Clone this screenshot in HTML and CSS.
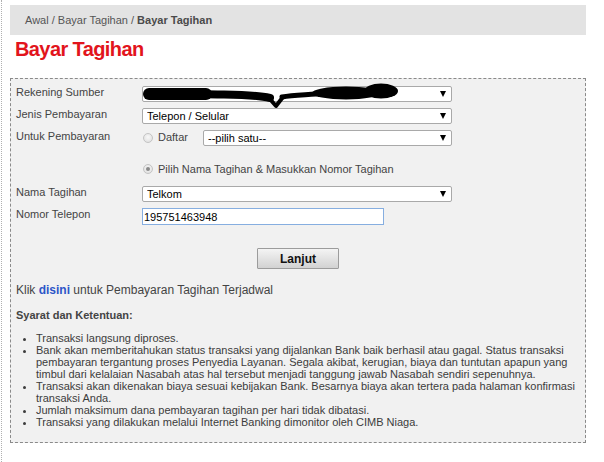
FILE: index.html
```html
<!DOCTYPE html>
<html lang="id">
<head>
<meta charset="utf-8">
<title>Bayar Tagihan</title>
<link rel="stylesheet" href="styles.css">
</head>
<body>
<div class="page">
  <div class="crumb">Awal / Bayar Tagihan / <b>Bayar Tagihan</b></div>
  <h1 class="title">Bayar Tagihan</h1>
  <div class="box">
    <div class="row">
      <div class="label">Rekening Sumber</div>
      <div class="field">
        <span class="sel full">
          <select><option></option></select>
          <svg class="redact" width="262" height="24" viewBox="0 0 262 24">
            <path d="M7 8 L64 8" stroke="#000" stroke-width="12" stroke-linecap="round" fill="none"/>
            <path d="M60 8 C90 9 110 8 128 12" stroke="#000" stroke-width="8" stroke-linecap="round" fill="none"/>
            <path d="M127 12 L134 20 L141 11" stroke="#000" stroke-width="4" stroke-linecap="round" stroke-linejoin="round" fill="none"/>
            <path d="M140 11 C150 9 160 9 174 8" stroke="#000" stroke-width="5" stroke-linecap="round" fill="none"/>
            <ellipse cx="204" cy="7" rx="34" ry="6.5" fill="#000"/>
            <ellipse cx="239" cy="5" rx="17" ry="7.5" fill="#000"/>
          </svg>
        </span>
      </div>
    </div>
    <div class="row">
      <div class="label">Jenis Pembayaran</div>
      <div class="field">
        <span class="sel full"><select><option>Telepon / Selular</option></select></span>
      </div>
    </div>
    <div class="row">
      <div class="label">Untuk Pembayaran</div>
      <div class="field opt">
        <input type="radio" name="mode" class="radio">
        <span class="opt-text narrow">Daftar</span>
        <span class="sel short"><select><option>--pilih satu--</option></select></span>
      </div>
    </div>
    <div class="row row-radio">
      <div class="label"></div>
      <div class="field opt">
        <input type="radio" name="mode" class="radio" checked>
        <span class="opt-text">Pilih Nama Tagihan &amp; Masukkan Nomor Tagihan</span>
      </div>
    </div>
    <div class="row row-after">
      <div class="label">Nama Tagihan</div>
      <div class="field">
        <span class="sel full"><select><option>Telkom</option></select></span>
      </div>
    </div>
    <div class="row">
      <div class="label">Nomor Telepon</div>
      <div class="field">
        <input class="phone" type="text" value="195751463948">
      </div>
    </div>
    <div class="actions">
      <button class="btn" type="button">Lanjut</button>
    </div>
    <p class="klik">Klik <a class="link" href="#">disini</a> untuk Pembayaran Tagihan Terjadwal</p>
    <p class="terms-title">Syarat dan Ketentuan:</p>
    <ul class="terms">
      <li>Transaksi langsung diproses.</li>
      <li>Bank akan memberitahukan status transaksi yang dijalankan Bank baik berhasil atau gagal. Status transaksi pembayaran tergantung proses Penyedia Layanan. Segala akibat, kerugian, biaya dan tuntutan apapun yang timbul dari kelalaian Nasabah atas hal tersebut menjadi tanggung jawab Nasabah sendiri sepenuhnya.</li>
      <li>Transaksi akan dikenakan biaya sesuai kebijakan Bank. Besarnya biaya akan tertera pada halaman konfirmasi transaksi Anda.</li>
      <li>Jumlah maksimum dana pembayaran tagihan per hari tidak dibatasi.</li>
      <li>Transaksi yang dilakukan melalui Internet Banking dimonitor oleh CIMB Niaga.</li>
    </ul>
  </div>
</div>
</body>
</html>
```
FILE: styles.css
```css
html, body {
  margin: 0;
  padding: 0;
  background: #fff;
  font-family: Arial, "Liberation Sans", sans-serif;
}

.page {
  margin-left: 1px;
  border-left: 1px dotted #b0b0b0;
  padding: 5px 18px 0 8px;
  min-height: 462px;
  box-sizing: border-box;
}

.crumb {
  height: 30px;
  line-height: 30px;
  background: #e3e3e3;
  padding-left: 15px;
  font-size: 11px;
  color: #555;
}

.crumb b {
  color: #4a4a4a;
}

.title {
  margin: 2px 0 0 5px;
  font-size: 20px;
  line-height: 24px;
  font-weight: bold;
  letter-spacing: -0.6px;
  color: #e2141c;
}

.box {
  margin-top: 17px;
  border: 1px dashed #8a8a8a;
  background: #f1f1f1;
  padding: 6px 5px 14px 5px;
}

.row {
  display: flex;
  height: 22px;
}

.row-radio {
  margin-top: 11px;
  height: 14px;
}

.row-after {
  margin-top: 9px;
}

.label {
  width: 126px;
  flex: none;
  font-size: 11px;
  line-height: 14px;
  color: #444;
}

.field {
  padding-top: 1px;
  flex: 1;
}

.field.opt {
  display: flex;
  align-items: flex-start;
}

.row-radio .field {
  padding-top: 0;
  align-items: center;
}

.sel {
  position: relative;
  display: block;
  height: 16px;
}

.sel.full {
  width: 310px;
}

.sel.short {
  width: 249px;
}

.sel select {
  -webkit-appearance: none;
  appearance: none;
  display: block;
  width: 100%;
  height: 16px;
  margin: 0;
  box-sizing: border-box;
  border: 1px solid #a9a9a9;
  border-radius: 2px;
  background: #fff;
  font-family: Arial, "Liberation Sans", sans-serif;
  font-size: 11px;
  line-height: 14px;
  color: #000;
  padding: 0 0 0 4px;
}

.sel::after {
  content: "";
  position: absolute;
  right: 6px;
  top: 5px;
  border-left: 3.5px solid transparent;
  border-right: 3.5px solid transparent;
  border-top: 6px solid #000;
}

.redact {
  position: absolute;
  left: 0;
  top: 0;
  overflow: visible;
}

.radio {
  -webkit-appearance: none;
  appearance: none;
  width: 10px;
  height: 10px;
  margin: 3px 5px 0 1px;
  border: 1px solid #c4c4c4;
  border-radius: 50%;
  background: radial-gradient(circle at 50% 40%, #f8f8f8, #dcdcdc);
  box-sizing: border-box;
  position: relative;
  flex: none;
}

.row-radio .radio {
  margin-top: 0;
}

.radio:checked::after {
  content: "";
  position: absolute;
  left: 2px;
  top: 2px;
  width: 4px;
  height: 4px;
  border-radius: 50%;
  background: #8a8a8a;
}

.opt-text {
  font-size: 11px;
  line-height: 14px;
  color: #444;
}

.opt-text.narrow {
  width: 45px;
  flex: none;
}

.phone {
  display: block;
  width: 242px;
  height: 17px;
  margin: 0;
  box-sizing: border-box;
  border: 1px solid #86aee0;
  background: #fff;
  font-family: Arial, "Liberation Sans", sans-serif;
  font-size: 11px;
  color: #000;
  padding: 0 1px;
  outline: none;
}

.actions {
  display: flex;
  justify-content: center;
  margin-top: 19px;
}

.btn {
  width: 82px;
  height: 21px;
  padding: 0;
  border: 1px solid #9c9c9c;
  border-radius: 1px;
  background: linear-gradient(#f4f4f4, #d2d2d2);
  font-family: Arial, "Liberation Sans", sans-serif;
  font-size: 12px;
  font-weight: bold;
  color: #111;
}

.klik {
  margin: 14px 0 0 0;
  font-size: 12px;
  line-height: 15px;
  color: #444;
}

.link {
  color: #2d55c8;
  font-weight: bold;
  text-decoration: none;
}

.terms-title {
  margin: 10px 0 0 0;
  font-size: 11px;
  line-height: 14px;
  font-weight: bold;
  color: #444;
}

.terms {
  margin: 10px 0 0 0;
  padding-left: 20px;
  font-size: 11px;
  line-height: 12px;
  color: #3c3c3c;
}
```
